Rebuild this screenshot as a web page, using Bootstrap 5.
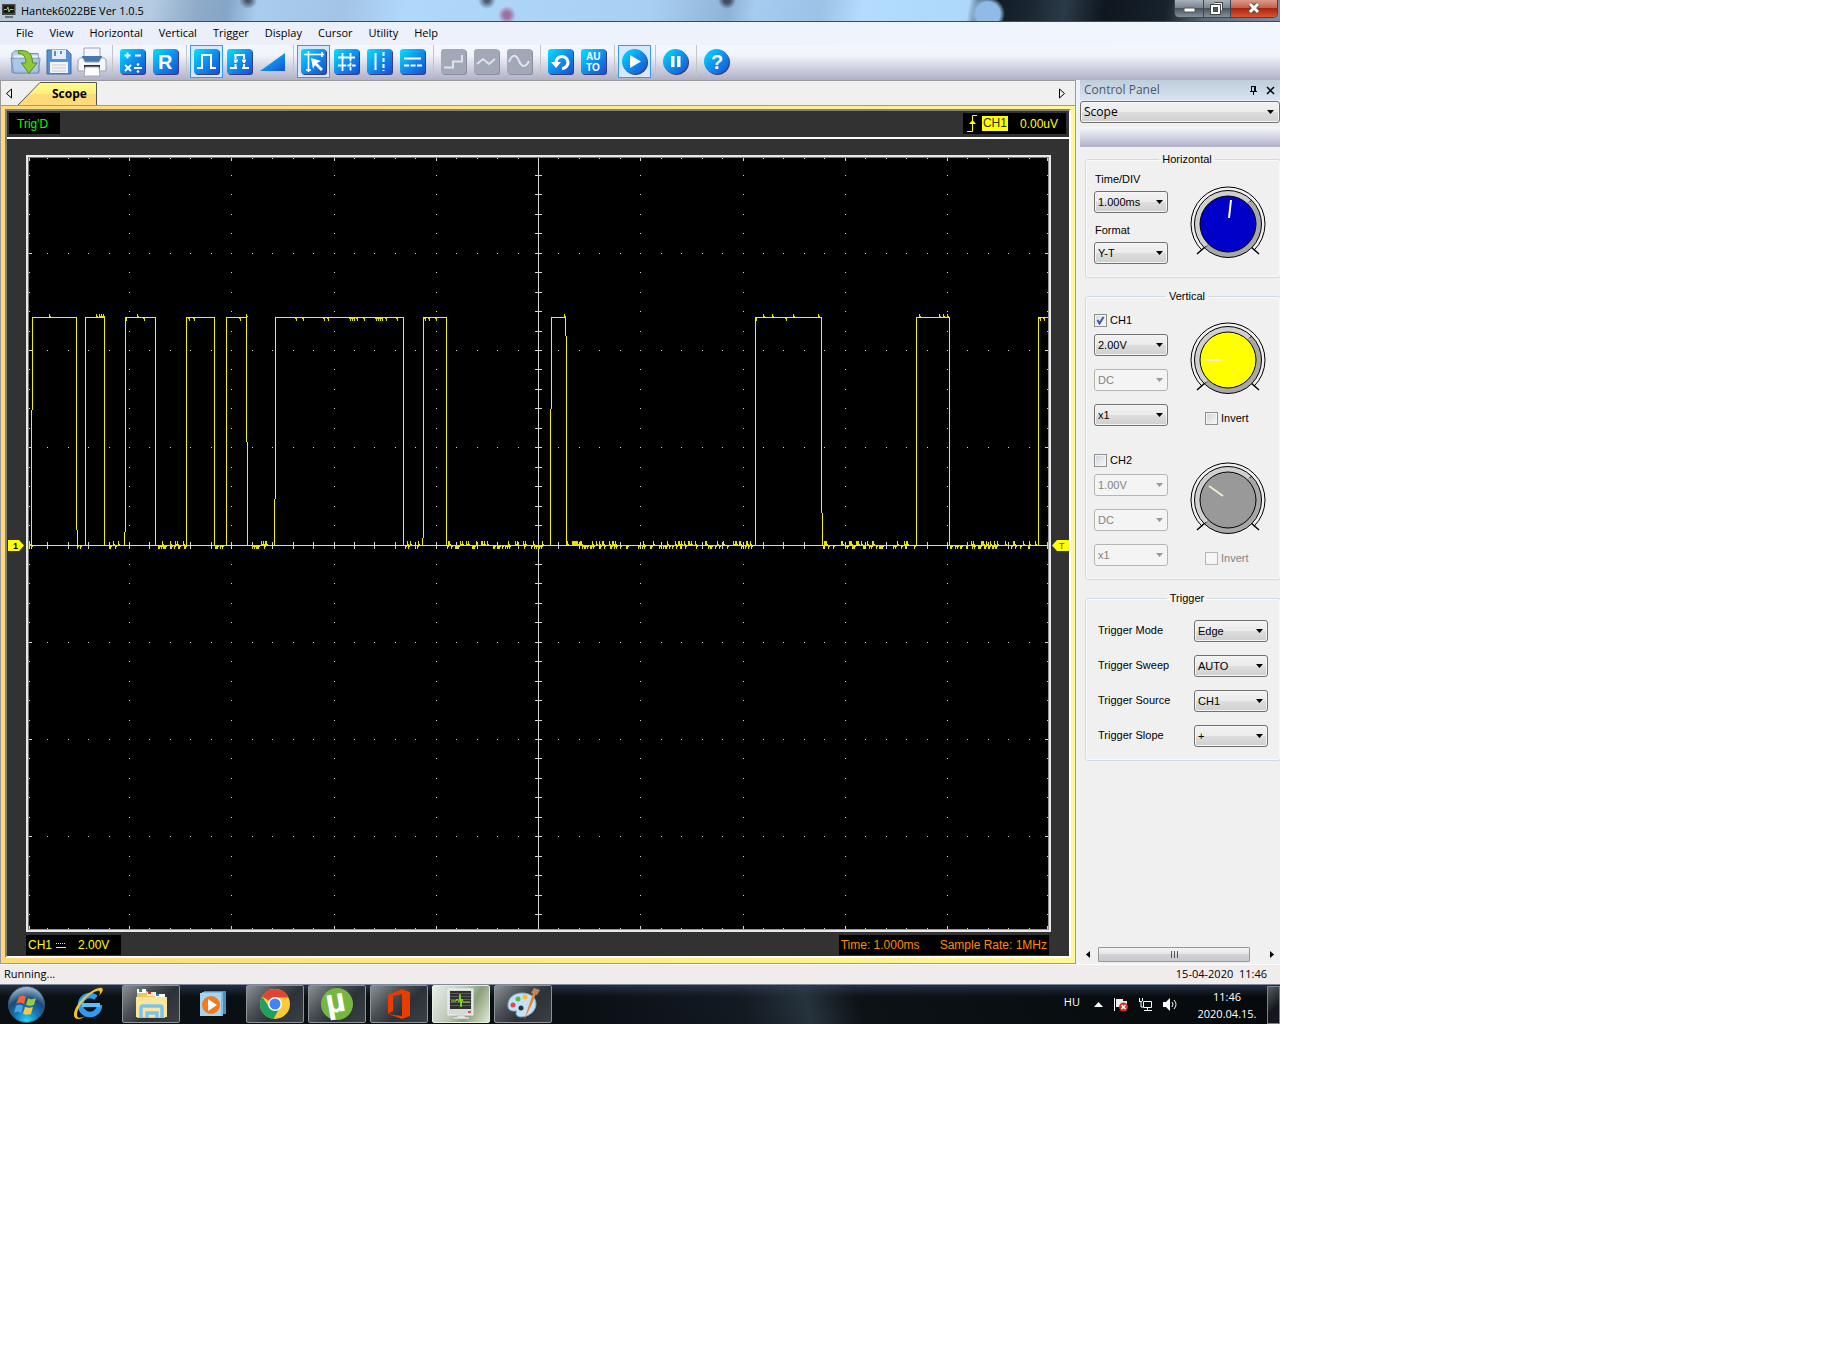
<!DOCTYPE html>
<html lang="en">
<head>
<meta charset="utf-8">
<meta name="viewport" content="width=device-width, initial-scale=1">
<title>Hantek6022BE Ver 1.0.5</title>
<link href="https://cdn.jsdelivr.net/npm/bootstrap@5.3.0/dist/css/bootstrap.min.css" rel="stylesheet">
<style>
  body { background: #fff; color: #000; font-family: "Open Sans", "Noto Sans", sans-serif; font-size: 11px; line-height: 14px; }
  svg { display: block; }
  .desktop { max-width: 1280px; }
  a { color: inherit; text-decoration: none; }

  /* window title */
  .titlebar { height: 22px; border-bottom: 1px solid #3a4a5e; padding-left: 2px;
    background:
      radial-gradient(circle at 988px 14px, #8fbbe6 0 12px, transparent 17px),
      radial-gradient(circle at 507px 15px, #a0709a 0 3px, transparent 9px),
      radial-gradient(circle at 487px 0, #4a5c74 0 2px, transparent 9px),
      radial-gradient(circle at 727px 0, #3d4c60 0 3px, transparent 9px),
      radial-gradient(circle at 248px 0, #46566a 0 2px, transparent 9px),
      linear-gradient(100deg, #b6c8da 0, #b4cbe2 150px, #8fabc9 195px, #84a5c8 225px, #a9cdef 255px, #a3c4e6 340px, #b0d8fb 400px, #a9d0f2 640px, #8fb3d6 720px, #a5cdf0 745px, #9cc2e6 810px, #b3dcfd 850px, #aed8fa 955px, #101a24 975px, #18242f 1010px, #2b3a48 1050px, #0e161e 1090px, #18222c 1150px, #5b6a7a 1190px, #8796a8 1280px); }
  .app-name { margin: 0 0 0 5px; font-size: 11px; font-weight: 400; line-height: 21px; }
  .winbtns { height: 18px; border: 1px solid #3c4650; border-top: 0; border-radius: 0 0 5px 5px; overflow: hidden; margin-right: 2px; }
  .winbtns button { border: 0; padding: 0; height: 17px; background: linear-gradient(#a9b2bb, #7b858f 45%, #4a545e 50%, #87919b); }
  .winbtns button + button { border-left: 1px solid #3c4650; }
  .winbtns .close-win { background: linear-gradient(#dc9a8c, #c8604c 45%, #a82410 50%, #d8562f); }

  .menubar { height: 23px; padding: 0 0 2px 16px; gap: 16px; background: linear-gradient(90deg, #eaeefa, #f2f6fd); }

  /* toolbar */
  .toolbar { height: 35px; padding: 0 9px; background: linear-gradient(#f4f7fd 0, #f1f4fb 28%, #d0d1e0 65%, #b0b0c8 100%); }
  .tool { width: 33px; height: 33px; padding: 0; border: 1px solid transparent; background: none; display: flex; align-items: center; justify-content: center; }
  .tool.on { border-color: #3399ff; background: #d6e8fb; }
  .tool-sep { width: 8px; height: 32px; }
  .tool-sep::before { content: ""; display: block; width: 1px; height: 32px; margin-left: 4px; background: #c4c4c4; }
  .tool svg text { font-family: "Liberation Sans", Arial, sans-serif; font-weight: 700; fill: #fff; }

  /* tab strip */
  .tabstrip { height: 25px; border-top: 1px solid #9a9a9a; border-left: 1px solid #9a9a9a; border-right: 1px solid #9a9a9a; background: #f0f0f0; padding: 0 9px 0 4px; }
  .tabstrip button { border: 0; padding: 0; background: none; }
  .tab-scope { width: 80px; height: 23px; margin-left: 5px; margin-top: 1px; padding: 5px 0 0 34px; font-size: 12px; font-weight: 700; }
  .tab-scope svg { left: 0; top: 0; z-index: 0; }
  .tab-scope span { position: relative; }

  /* scope frame */
  .scope-col { min-width: 0; }
  .frame-gold { border: 1px solid #9a9a9a; padding: 3px 4px 5px; background: linear-gradient(90deg, #ffd97a, #fff799); }
  .frame-dark { border: 2px solid #808080; border-right-color: #fff; border-bottom-color: #fff; background: #323232; font-family: "Liberation Sans", Arial, sans-serif; font-size: 12px; }
  .scope-head { height: 28px; padding: 2px 3px 0 2px; border-bottom: 2px solid #fff; }
  .scope-foot { padding: 3px 20px 1px 19px; }
  .readout { background: #000; height: 21px; }
  .readout.low { height: 20px; padding: 0 2px; }
  .green { color: #00ff00; } .yellow { color: #ffff00; } .orange { color: #ff8c00; }
  .chip { background: #ff0; color: #323232; height: 15px; line-height: 15px; padding: 0 1px; }
  .side-l { width: 19px; } .side-r { width: 18px; }
  .side-l, .side-r { padding-top: 4px; }
  .screen { border: 2px solid #e8e8e8; background: #000; }
  .screen-in { border: 1px solid #777; border-right-color: #999; border-bottom-color: #999; }
  .screen svg { width: 100%; height: auto; }

  /* control panel */
  .panel { width: 204px; background: #f0f0f0; border-left: 4px solid #eef2fb; }
  .panel-title { height: 20px; padding: 0 5px 0 4px; color: #4c5866; font-size: 12px; background: linear-gradient(#c0cedc, #d6e4f2); }
  .panel-title button { border: 0; padding: 0; background: none; }
  .panel-strip { height: 20px; margin-top: 4px; background: linear-gradient(#f4f7fd, #d4d5e3 50%, #b0b0c8); }
  .groups { padding: 5px 0 0 5px; gap: 11px; font-family: "Liberation Sans", Arial, sans-serif; font-size: 11px; }
  .groupbox { border: 1px solid #d0dce4; border-radius: 3px; width: 196px; padding: 0 0 13px 8px; box-shadow: inset 0 0 0 1px #fafafa; }
  .groupbox legend { float: none; width: auto; margin: 0 auto; padding: 0 3px; font-size: 11px; line-height: 14px; }
  .combo { width: 74px; height: 22px; padding: 0 16px 0 3px; border: 1px solid #707070; border-radius: 3px; color: #000; font-size: 11px; line-height: 14px;
    background-image: url("data:image/svg+xml,%3Csvg xmlns='http://www.w3.org/2000/svg' width='7' height='4'%3E%3Cpath d='M0 0h7L3.5 4z'/%3E%3C/svg%3E"), linear-gradient(#f2f2f2, #ebebeb 48%, #dddddd 52%, #cfcfcf);
    background-size: 7px 4px, 100% 100%; background-position: right 4px center, 0 0; box-shadow: inset 0 0 0 1px #f6f6f6; }
  .combo:disabled { color: #838383; border-color: #b4b4b4; background-color: #f4f4f4;
    background-image: url("data:image/svg+xml,%3Csvg xmlns='http://www.w3.org/2000/svg' width='7' height='4'%3E%3Cpath d='M0 0h7L3.5 4z' fill='%23999'/%3E%3C/svg%3E"); background-size: 7px 4px; background-position: right 4px center; }
  .combo-wide { width: 100%; margin-top: 1px; font-size: 12px; background-position: right 5px center, 0 0; }
  .lbl { display: block; height: 14px; margin-bottom: 5px; padding-left: 1px; }
  .tick { appearance: none; width: 13px; height: 13px; margin: 0 3px 0 0; border: 1px solid #8e8f8f; background: linear-gradient(135deg, #cfd5dc, #f8f8f8); box-shadow: inset 0 0 0 1px #f4f4f4; }
  .tick:checked { background: url("data:image/svg+xml,%3Csvg xmlns='http://www.w3.org/2000/svg' viewBox='0 0 11 11'%3E%3Cpath d='M2.500 5l2 3.500L8.500 2' fill='none' stroke='%23405a9c' stroke-width='2'/%3E%3C/svg%3E") center / 11px 11px no-repeat, linear-gradient(135deg, #d5dae2, #fafafa); }
  .tick:disabled { border-color: #b8b8b8; background: #f6f6f6; }
  .off { color: #838383; }
  .ch-row { height: 14px; }
  .ch-name { margin-bottom: 7px; }
  .channel { gap: 22px; padding-top: 10px; }
  .channel + .channel { padding-top: 27px; }
  .ch-knob { padding-top: 9px; gap: 13px; }
  .invert { padding-left: 15px; }
  .combos { gap: 13px; }
  .timebase { gap: 22px; }
  .hor-left { padding-top: 6px; }
  .hor-left .combo + .lbl { margin-top: 10px; }
  .hor-knob { padding-top: 20px; }
  .trig-rows { padding: 15px 12px 0 4px; gap: 13px; }
  .trig-rows label { padding-top: 3px; }
  .hscroll { height: 15px; margin-bottom: 2px; padding: 0 6px; }
  .hscroll button { border: 0; padding: 0; background: none; }
  .thumb { width: 152px; height: 15px; margin-left: 7px; border: 1px solid #979797; border-radius: 1px; background: linear-gradient(#f4f4f4, #e6e6ea 45%, #d2d2d8 50%, #c8c8ce); }

  .statusbar { height: 20px; padding: 2px 13px 0 4px; border-top: 1px solid #fff; background: #f0ecec; }

  /* taskbar */
  .taskbar { height: 40px; border-top: 1px solid #7c889a; color: #fff;
    background: linear-gradient(rgba(50,62,86,.7), rgba(0,0,0,0) 30%), linear-gradient(75deg, #0a0f14 0 45%, #131a22 58%, #26323c 63%, #0c1216 67%, #05090c 100%); }
  .tb-item { width: 58px; height: 38px; padding: 0; border: 1px solid transparent; border-radius: 2px; background: none; display: flex; align-items: center; justify-content: center; margin-right: 4px; }
  .tb-item svg { overflow: visible; }
  .tb-item.open { border-color: #8c9298; background: linear-gradient(135deg, #8a8f93 0, #4a5055 35%, #2c3237 60%, #3a4046 100%); }
  .tb-item.active { border-color: #e8efe4; background: linear-gradient(120deg, #e9eeee 0, #b9c6b2 45%, #8a9f7a 65%, #e0e8d6 100%); }
  .start { width: 60px; height: 38px; padding: 0 0 0 8px; border: 0; background: none; }
  .tray { gap: 10px; }
  .tray button { border: 0; padding: 0; background: none; }
  .lang { padding: 0 4px 6px 0; }
  .clock { width: 80px; line-height: 17px; }
  .tray .showdesk { width: 13px; height: 38px; border: 1px solid #7a828a; background: linear-gradient(135deg, #555e66, #12181d 60%); }
</style>
<script src="https://cdn.jsdelivr.net/npm/bootstrap@5.3.0/dist/js/bootstrap.bundle.min.js"></script>
</head>
<body>
<svg width="0" height="0" class="position-absolute" aria-hidden="true">
  <defs>
    <linearGradient id="blue" x1="0" y1="0" x2="1" y2="1"><stop offset="0" stop-color="#00e4ff"/><stop offset=".5" stop-color="#1090ee"/><stop offset="1" stop-color="#1450d0"/></linearGradient>
    <linearGradient id="gold" x1="0" y1="0" x2="0" y2="1"><stop offset="0" stop-color="#fffb86"/><stop offset=".5" stop-color="#fff07e"/><stop offset=".52" stop-color="#ffdc78"/><stop offset="1" stop-color="#ffd97a"/></linearGradient>
    <linearGradient id="ring" x1="0" y1="0" x2="1" y2="1"><stop offset=".5" stop-color="#d0d0d0"/><stop offset=".5" stop-color="#a8a8a8"/></linearGradient>
    <radialGradient id="orb" cx=".5" cy=".95" r=".95"><stop offset="0" stop-color="#20d8ff"/><stop offset=".35" stop-color="#1478b8"/><stop offset=".65" stop-color="#1c4a78"/><stop offset="1" stop-color="#a8c4d8"/></radialGradient>
    <symbol id="tile" viewBox="0 0 26 26"><rect x="1" y="1" width="25" height="25" rx="3" fill="#3c3c84"/><rect width="25" height="25" rx="3" fill="url(#blue)"/></symbol>
    <symbol id="disc" viewBox="0 0 26 26"><circle cx="13.500" cy="13.500" r="12.500" fill="#3c3c74"/><circle cx="12.500" cy="12.500" r="12.500" fill="url(#blue)"/></symbol>
    <symbol id="dull" viewBox="0 0 26 26"><rect x="1" y="1" width="25" height="25" rx="3" fill="#8a8e9e"/><rect width="25" height="25" rx="3" fill="#a2a8b8"/></symbol>
    <symbol id="dial" viewBox="0 0 76 76">
      <g fill="none" stroke="#000">
        <path d="M12 64.300a37 37 0 1 1 52 0"/><path d="M7 68l9-8M69 68l-9-8" stroke-width="1.500"/>
      </g>
      <circle cx="38" cy="38" r="33.500" fill="url(#ring)" stroke="#000"/>
      <path d="M57 18l5-4M19 58l-5 4" stroke="#000"/>
      <path d="M57 18l3-2M19 58l-3 2" stroke="#ddd"/>
    </symbol>
    <symbol id="monitor" viewBox="0 0 28 32">
      <path d="M1 1h25v26H1z" fill="#d8dada" stroke="#f6f6f6"/><path d="M3 3h21v18H3z" fill="#303030"/>
      <path d="M3 5.500h21M3 8.500h21M3 11.500h21M3 14.500h21M3 17.500h21" stroke="#5a5a5a"/><path d="M4 13h5l1-2 2 3 1-8 1 13 1-8 1 3h7" fill="none" stroke="#8ae820"/>
      <path d="M21 24h3" stroke="#d22" stroke-width="1.500"/><path d="M10 27h8v2h4v2H6v-2h4z" fill="#e0e0e0" stroke="#aaa" stroke-width=".5"/>
    </symbol>
  </defs>
</svg>

<div class="desktop">
  <header class="titlebar d-flex align-items-start">
    <svg class="mt-1" width="14" height="15" viewBox="0 0 28 30"><path d="M0 0h27v22H0z" fill="#444"/><path d="M3 3h21v15H3z" fill="#171717"/><path d="M4 11h6l2-5 2 10 2-5h7" fill="none" stroke="#8ad050" stroke-width="2"/><path d="M6 26h16" stroke="#555" stroke-width="3"/></svg>
    <h1 class="app-name">Hantek6022BE Ver 1.0.5</h1>
    <div class="winbtns d-flex ms-auto">
      <button type="button" aria-label="Minimize"><svg width="28" height="17"><rect x="9" y="8" width="11" height="4" rx="1" fill="#fff" stroke="#555"/></svg></button>
      <button type="button" aria-label="Restore"><svg width="26" height="17"><g fill="none"><path d="M10.500 3.500h7v7" stroke="#444" stroke-width="3"/><path d="M10.500 3.500h7v7" stroke="#fff"/><path d="M8 6h7v7H8z" stroke="#444" stroke-width="4"/><path d="M8 6h7v7H8z" stroke="#fff" stroke-width="2"/></g></svg></button>
      <button type="button" class="close-win" aria-label="Close"><svg width="46" height="17"><path d="M19 4l8 8M27 4l-8 8" stroke="#553" stroke-width="5"/><path d="M19 4l8 8M27 4l-8 8" stroke="#fff" stroke-width="3"/></svg></button>
    </div>
  </header>

  <nav class="menubar d-flex align-items-center" aria-label="Menu">
    <a href="#">File</a><a href="#">View</a><a href="#">Horizontal</a><a href="#">Vertical</a><a href="#">Trigger</a><a href="#">Display</a><a href="#">Cursor</a><a href="#">Utility</a><a href="#">Help</a>
  </nav>

  <div class="toolbar d-flex" role="toolbar" aria-label="Tools">
    <button class="tool" type="button" aria-label="Open"><svg width="33" height="28" viewBox="0 0 33 28"><path d="M2 25V5l3-3h8l2 3h15l1 20z" fill="#b6cdec" stroke="#6f8cae"/><path d="M4 7h26v16H4z" fill="#e8f0fa"/><path d="M1 10h31l-2 16H4z" fill="#9dbde6" opacity=".8" stroke="#6484ac"/><path d="M9 2c8-1 15 1 15 13h5l-9 11-8-11h5c0-7-3-10-8-10z" fill="#92c837" stroke="#4f8a1c"/></svg></button>
    <button class="tool" type="button" aria-label="Save"><svg width="26" height="26" viewBox="0 0 26 26"><path d="M1 1h20l4 4v20H1z" fill="#5590d8" stroke="#3a6cb0"/><path d="M6 1h14v9H6z" fill="#e4edf8"/><path d="M8 2h2v5H8zM14 2h2v3h-2z" fill="#5f8cc8"/><path d="M4 13h18v11H4z" fill="#f2f4f8"/><path d="M6 16h14M6 19h14M6 22h14" stroke="#c2c8d4"/></svg></button>
    <button class="tool" type="button" aria-label="Print"><svg width="30" height="30" viewBox="0 0 30 30"><path d="M7 1h16v12H7z" fill="#f4f6fa" stroke="#9aa4b8"/><path d="M5 9h20v6H5z" fill="#4677ac"/><path d="M1 13c2-3 5-2 5-2l2 4h14l2-4s4-1 5 2v11H1z" fill="#f6f7fa" stroke="#9aa0ae"/><path d="M7 18h16v5H7z" fill="#222c3c"/><path d="M8 20h14l1 9H7z" fill="#fff" stroke="#a6a6b0"/></svg></button>
    <span class="tool-sep"></span>
    <button class="tool" type="button" aria-label="Math"><svg width="26" height="26"><use href="#tile"/><path d="M4.500 6.500h6M7.500 3.500v6M15 6.500h6M5 16l6 6M11 16l-6 6M14 19h8" stroke="#fff" stroke-width="1.800"/><circle cx="18" cy="15.500" r="1.300" fill="#fff"/><circle cx="18" cy="22.500" r="1.300" fill="#fff"/></svg></button>
    <button class="tool" type="button" aria-label="Reference"><svg width="26" height="26"><use href="#tile"/><text x="5" y="20" font-size="20">R</text></svg></button>
    <span class="tool-sep"></span>
    <button class="tool on" type="button" aria-label="Channel 1"><svg width="26" height="26"><use href="#tile"/><path d="M3 19h5V6h9v13h5" fill="none" stroke="#fff" stroke-width="2"/></svg></button>
    <button class="tool" type="button" aria-label="Channel 2"><svg width="26" height="26"><use href="#tile"/><path d="M3 19h7M15 19h7" fill="none" stroke="#fff" stroke-width="2"/><path d="M8.500 18V6M17 18V6" stroke="#fff" stroke-width="2" stroke-dasharray="3 1"/><path d="M7 6h11M7 11.500h4M15 11.500h4" stroke="#fff" stroke-width="2"/></svg></button>
    <button class="tool" type="button" aria-label="Ramp"><svg width="26" height="26"><path d="M0 22L25 4v18z" fill="url(#blue)"/></svg></button>
    <span class="tool-sep"></span>
    <button class="tool on" type="button" aria-label="Cursor tracking"><svg width="26" height="26"><use href="#tile"/><path d="M3 5.500h20M7.500 2v21M21 3v5M5 21h5" fill="none" stroke="#fff" stroke-width="1.600"/><path d="M10 9l10 3-4 2 6 6-2 2-6-6-2 4z" fill="#fff"/></svg></button>
    <button class="tool" type="button" aria-label="Cross cursor"><svg width="26" height="26"><use href="#tile"/><path d="M8.500 4v18M4 8.500h17" stroke="#fff" stroke-width="1.800"/><path d="M16.500 4v18M4 16.500h18" stroke="#fff" stroke-width="1.800" stroke-dasharray="3.500 1.200"/></svg></button>
    <button class="tool" type="button" aria-label="Vertical cursor"><svg width="26" height="26"><use href="#tile"/><path d="M8.500 4v17" stroke="#fff" stroke-width="2"/><path d="M16.500 3v19" stroke="#fff" stroke-width="2" stroke-dasharray="4 2"/></svg></button>
    <button class="tool" type="button" aria-label="Horizontal cursor"><svg width="26" height="26"><use href="#tile"/><path d="M4 9.500h17" stroke="#fff" stroke-width="2"/><path d="M4 16.500h18" stroke="#fff" stroke-width="2" stroke-dasharray="5 1.500"/></svg></button>
    <span class="tool-sep"></span>
    <button class="tool" type="button" aria-label="Step"><svg width="26" height="26"><use href="#dull"/><path d="M3 18.500h9v-6h9V6" fill="none" stroke="#dfe3ee" stroke-width="2"/></svg></button>
    <button class="tool" type="button" aria-label="Linear"><svg width="26" height="26"><use href="#dull"/><path d="M3 15l6-5 6 5 6-5" fill="none" stroke="#dfe3ee" stroke-width="2"/></svg></button>
    <button class="tool" type="button" aria-label="Sine"><svg width="26" height="26"><use href="#dull"/><path d="M2 13C5 5 9 5 12 12s7 6 10 0" fill="none" stroke="#dfe3ee" stroke-width="2"/></svg></button>
    <span class="tool-sep"></span>
    <button class="tool" type="button" aria-label="Reset"><svg width="26" height="26"><use href="#tile"/><path d="M8 14a6 6 0 1 1 6 5.500" fill="none" stroke="#fff" stroke-width="3.200"/><path d="M3 13h10l-5 6z" fill="#fff"/></svg></button>
    <button class="tool" type="button" aria-label="Auto set"><svg width="26" height="26"><use href="#tile"/><text x="5" y="11" font-size="10">AU</text><text x="5" y="22" font-size="10">TO</text></svg></button>
    <span class="tool-sep"></span>
    <button class="tool on" type="button" aria-label="Start"><svg width="26" height="26"><use href="#disc"/><path d="M8 6l11 6.500L8 19z" fill="#fff"/></svg></button>
    <span class="tool-sep"></span>
    <button class="tool" type="button" aria-label="Pause"><svg width="26" height="26"><use href="#disc"/><path d="M8 7h3.500v11H8zM14 7h3.500v11H14z" fill="#fff"/></svg></button>
    <span class="tool-sep"></span>
    <button class="tool" type="button" aria-label="Help"><svg width="26" height="26"><use href="#disc"/><text x="7" y="20" font-size="20">?</text></svg></button>
  </div>

  <div class="d-flex">
    <main class="scope-col flex-grow-1">
      <div class="tabstrip d-flex align-items-center">
        <button type="button" aria-label="Previous tab"><svg width="8" height="11"><path d="M6.500 1v9L1.500 5.500z" fill="none" stroke="#000"/></svg></button>
        <a href="#" class="tab-scope position-relative d-block"><svg class="position-absolute" width="80" height="23"><path d="M0 23L22 1h56v22z" fill="url(#gold)"/><path d="M0 23L22 .500h56.500V23" fill="none" stroke="#555"/></svg><span>Scope</span></a>
        <button type="button" class="ms-auto" aria-label="Next tab"><svg width="8" height="11"><path d="M1.500 1v9l5-4.500z" fill="none" stroke="#000"/></svg></button>
      </div>
      <div class="frame-gold">
        <div class="frame-dark">
          <div class="scope-head d-flex justify-content-between">
            <div class="readout green d-flex align-items-center px-2 pe-2"><span class="pe-1">Trig'D</span></div>
            <div class="readout yellow d-flex align-items-center ps-1 pe-2">
              <svg width="11" height="17"><path d="M0 16.500h5.500V.500H10" fill="none" stroke="#ff0"/><path d="M2 9l3.500-4L9 9z" fill="#ff0"/></svg>
              <span class="chip ms-1 me-2">CH1</span><span class="ps-1">0.00uV</span>
            </div>
          </div>
          <div class="d-flex align-items-center pt-3">
            <div class="side-l"><svg width="18" height="11" viewBox="0 0 18 11"><path d="M1 0h11l5 5.500-5 5.500H1z" fill="#ff0"/><text x="6" y="9" font-size="9" font-weight="700">1</text></svg></div>
            <div class="screen flex-grow-1"><div class="screen-in">
              <svg id="scope" viewBox="0 0 1019 771" shape-rendering="crispEdges" role="img" aria-label="Channel 1 trace">
                <path id="grid" fill="#d8d8d8"/>
                <path id="trace" fill="none" stroke="#f0f000"/>
                <path id="noise" fill="#e4e400"/>
              </svg>
            </div></div>
            <div class="side-r"><svg width="18" height="11" viewBox="0 0 18 11"><path d="M18 0H6L1 5.500 6 11h12z" fill="#ff0"/><text x="8" y="9" font-size="9" fill="#8a4a00">T</text></svg></div>
          </div>
          <div class="scope-foot d-flex justify-content-between">
            <div class="readout low yellow d-flex align-items-center pe-2">CH1<svg class="ms-1 me-2" width="10" height="7"><path d="M0 1.500h10" stroke="#ff0" stroke-dasharray="1 1"/><path d="M0 5.500h10" stroke="#ff0"/></svg><span class="px-1">2.00V</span></div>
            <div class="readout low orange d-flex align-items-center"><span class="me-3">Time: 1.000ms</span><span class="ps-1">Sample Rate: 1MHz</span></div>
          </div>
        </div>
      </div>
    </main>

    <aside class="panel flex-shrink-0 d-flex flex-column overflow-hidden">
      <div class="panel-title d-flex align-items-center">
        <span>Control Panel</span>
        <button type="button" class="ms-auto" aria-label="Pin"><svg width="9" height="10"><path d="M2.500 1v5M6.500 1v5M1 6.500h7M2 1.500h5M4.500 7v3" stroke="#000" fill="none"/><path d="M5.500 2v5" stroke="#000"/></svg></button>
        <button type="button" class="ms-2" aria-label="Close panel"><svg width="9" height="9"><path d="M1 1l7 7M8 1L1 8" stroke="#000" stroke-width="1.500"/></svg></button>
      </div>
      <select class="form-select combo combo-wide" aria-label="Panel"><option>Scope</option></select>
      <div class="panel-strip"></div>
      <div class="groups d-flex flex-column">
        <fieldset class="groupbox">
          <legend>Horizontal</legend>
          <div class="d-flex timebase">
            <div class="hor-left">
              <label class="lbl" for="timediv">Time/DIV</label>
              <select id="timediv" class="form-select combo"><option>1.000ms</option></select>
              <label class="lbl" for="format">Format</label>
              <select id="format" class="form-select combo"><option>Y-T</option></select>
            </div>
            <div class="hor-knob"><svg width="76" height="76" role="img" aria-label="Time knob"><use href="#dial"/><circle cx="38" cy="38" r="28" fill="#0000c8" stroke="#000"/><path d="M41 14l-2 18" stroke="#fff" stroke-width="2"/></svg></div>
          </div>
        </fieldset>
        <fieldset class="groupbox">
          <legend>Vertical</legend>
          <div class="d-flex channel">
            <div>
              <div class="ch-row ch-name d-flex align-items-center"><input class="tick" type="checkbox" id="ch1" checked><label for="ch1">CH1</label></div>
              <div class="d-flex flex-column combos">
                <select class="form-select combo" aria-label="CH1 volts"><option>2.00V</option></select>
                <select class="form-select combo" aria-label="CH1 coupling" disabled><option>DC</option></select>
                <select class="form-select combo" aria-label="CH1 probe"><option>x1</option></select>
              </div>
            </div>
            <div class="ch-knob d-flex flex-column">
              <svg width="76" height="76" role="img" aria-label="CH1 knob"><use href="#dial"/><circle cx="38" cy="38" r="28" fill="#ff0" stroke="#000"/><path d="M15 38h17" stroke="#f0f0d0" stroke-width="2"/></svg>
              <div class="ch-row invert d-flex align-items-center"><input class="tick" type="checkbox" id="inv1"><label for="inv1">Invert</label></div>
            </div>
          </div>
          <div class="d-flex channel">
            <div>
              <div class="ch-row ch-name d-flex align-items-center"><input class="tick" type="checkbox" id="ch2"><label for="ch2">CH2</label></div>
              <div class="d-flex flex-column combos">
                <select class="form-select combo" aria-label="CH2 volts" disabled><option>1.00V</option></select>
                <select class="form-select combo" aria-label="CH2 coupling" disabled><option>DC</option></select>
                <select class="form-select combo" aria-label="CH2 probe" disabled><option>x1</option></select>
              </div>
            </div>
            <div class="ch-knob d-flex flex-column">
              <svg width="76" height="76" role="img" aria-label="CH2 knob"><use href="#dial"/><circle cx="38" cy="38" r="28" fill="#999" stroke="#000"/><path d="M19 24l14 10" stroke="#eeeecc" stroke-width="2"/></svg>
              <div class="ch-row invert d-flex align-items-center"><input class="tick" type="checkbox" id="inv2" disabled><label for="inv2" class="off">Invert</label></div>
            </div>
          </div>
        </fieldset>
        <fieldset class="groupbox">
          <legend>Trigger</legend>
          <div class="trig-rows d-flex flex-column">
            <div class="d-flex justify-content-between"><label for="tm">Trigger Mode</label><select id="tm" class="form-select combo"><option>Edge</option></select></div>
            <div class="d-flex justify-content-between"><label for="tsw">Trigger Sweep</label><select id="tsw" class="form-select combo"><option>AUTO</option></select></div>
            <div class="d-flex justify-content-between"><label for="tso">Trigger Source</label><select id="tso" class="form-select combo"><option>CH1</option></select></div>
            <div class="d-flex justify-content-between"><label for="tsl">Trigger Slope</label><select id="tsl" class="form-select combo"><option>+</option></select></div>
          </div>
        </fieldset>
      </div>
      <div class="hscroll d-flex align-items-center mt-auto">
        <button type="button" aria-label="Scroll left"><svg width="5" height="7"><path d="M4 0v7L0 3.500z"/></svg></button>
        <div class="thumb d-flex justify-content-center align-items-center"><svg width="9" height="7"><path d="M1.500 0v7M4.500 0v7M7.500 0v7" stroke="#555"/></svg></div>
        <button type="button" class="ms-auto" aria-label="Scroll right"><svg width="5" height="7"><path d="M1 0v7l4-3.500z"/></svg></button>
      </div>
    </aside>
  </div>

  <div class="statusbar d-flex justify-content-between"><span>Running...</span><span>15-04-2020&nbsp; 11:46</span></div>

  <footer class="taskbar d-flex">
    <button class="start" type="button" aria-label="Start menu"><svg width="37" height="37" viewBox="0 0 37 37"><circle cx="18.500" cy="18.500" r="18" fill="url(#orb)" stroke="#405668"/><path d="M11 11c3-2 5-1 7 0l-2 7c-2-1-5-2-8 0z" fill="#f0643c"/><path d="M20 12c3 2 6 1 8 0l-2 7c-3 1-5 1-8 0z" fill="#9ccc3c"/><path d="M8 20c3-2 5-1 7 0l-2 7c-2-1-4-2-7 0z" fill="#4aa4e8"/><path d="M17 21c3 1 5 1 8 0l-2 7c-3 1-5 1-8 0z" fill="#fcc83c"/></svg></button>
    <button class="tb-item" type="button" aria-label="Internet Explorer"><svg width="34" height="34" viewBox="0 0 34 34"><circle cx="18" cy="18" r="9.500" fill="none" stroke="#2c9cf0" stroke-width="5.500" stroke-dasharray="51 9"/><path d="M10 18h18" stroke="#5cc0fa" stroke-width="4"/><path d="M27 9c5-6 5-9 0-8C17 3 2 18 2 28c0 6 8 4 12 1-5 2-9 3-9-1C5 19 17 6 25 4c3-1 4 1 2 5z" fill="#f4c42c"/></svg></button>
    <button class="tb-item open" type="button" aria-label="Explorer"><svg width="33" height="32" viewBox="0 0 33 32"><path d="M2 3h10l2 3h16v24H2z" fill="#e8c860"/><path d="M2 1h9v4H2z" fill="#fff"/><path d="M4 1h3v3H4z" fill="#1a2"/><path d="M12 4h9v4h-9z" fill="#f4eccc"/><path d="M13 4h3v2h-3z" fill="#d33"/><path d="M20 6h10v3H20z" fill="#fff"/><path d="M21 6h3v2h-3z" fill="#28d"/><path d="M1 9h31v20H1z" fill="#f9e59c"/><path d="M6 30V20q0-2 2-2h17q2 0 2 2v10M12 30v-5h10v5" fill="none" stroke="#7cc4ec" stroke-width="3.500"/></svg></button>
    <button class="tb-item" type="button" aria-label="Media Player"><svg width="28" height="28" viewBox="0 0 28 28"><path d="M5 1h22v23H5z" fill="#4b8fbc"/><path d="M3 2h21v24H3z" fill="#7fbce0"/><path d="M1 3h21v23H1z" fill="#a8d4ee"/><circle cx="12" cy="15" r="9" fill="#f07a1c"/><path d="M9 9l9 6-9 6z" fill="#fff"/></svg></button>
    <button class="tb-item open" type="button" aria-label="Chrome"><svg width="32" height="32" viewBox="0 0 32 32"><circle cx="16" cy="16" r="15" fill="#fbc93a"/><path d="M16 16L3 8.500A15 15 0 0 1 29.500 9.500H16z" fill="#e04434"/><path d="M3 8.500A15 15 0 0 0 14.500 31L21 19l-5-3-6 3z" fill="#1fa05c"/><circle cx="16" cy="16" r="7" fill="#fff"/><circle cx="16" cy="16" r="5.500" fill="#4484f0"/></svg></button>
    <button class="tb-item open" type="button" aria-label="uTorrent"><svg width="32" height="34" viewBox="0 0 32 34"><circle cx="16" cy="17" r="16" fill="#76b83f"/><text x="5" y="25" transform="rotate(-10 16 17)" font-family="Liberation Sans, sans-serif" font-weight="700" font-size="34" fill="#fff">µ</text></svg></button>
    <button class="tb-item open" type="button" aria-label="Office"><svg width="26" height="32" viewBox="0 0 26 32"><path d="M2 7L16 1l8 3v24l-8 3L2 26l14 2V6L7 8v15l-5 3z" fill="#eb3c00"/></svg></button>
    <button class="tb-item active" type="button" aria-label="Hantek"><svg width="28" height="34"><use href="#monitor"/></svg></button>
    <button class="tb-item open" type="button" aria-label="Paint"><svg width="34" height="34" viewBox="0 0 34 34"><path d="M2 20C1 11 8 6 16 6s14 4 14 11-7 13-15 13c-5 0-6-4-4-6-2 0-8 1-9-4z" fill="#c4e0f2" stroke="#7ba8c8"/><circle cx="7" cy="18" r="2.500" fill="#e44"/><circle cx="12" cy="12" r="2.500" fill="#5b4"/><circle cx="19" cy="10" r="2.500" fill="#fb3"/><circle cx="15" cy="21" r="2.500" fill="#234"/><path d="M27 6L18 33l9-18 3-9z" fill="#e08a3c"/><path d="M25 6l3-5 6 2-3 5z" fill="#b88860"/></svg></button>

    <div class="tray d-flex align-items-center ms-auto">
      <span class="lang">HU</span>
      <button type="button" aria-label="Hidden icons"><svg width="9" height="5"><path d="M0 5l4.500-5L9 5z" fill="#fff"/></svg></button>
      <button type="button" aria-label="Action Center"><svg width="15" height="15"><path d="M1.500 1v13" stroke="#fff"/><path d="M3 2h7v2h4v6H3z" fill="#eee"/><circle cx="10.500" cy="10" r="4.500" fill="#d43020"/><path d="M8.500 8l4 4M12.500 8l-4 4" stroke="#fff" stroke-width="1.500"/></svg></button>
      <button type="button" aria-label="Network"><svg width="15" height="15"><path d="M5.500 4.500h8v6h-8zM6 13.500h8M9.500 11v2M1.500 1v3M4.500 1v3M1 4.500h3M3 5v5h2" fill="none" stroke="#fff"/></svg></button>
      <button type="button" aria-label="Volume"><svg width="14" height="13"><path d="M0 4h3l4-4v13L3 9H0z" fill="#fff"/><path d="M9 4q2 2.500 0 5M11 2q4 4.500 0 9" fill="none" stroke="#fff"/></svg></button>
      <div class="d-flex align-items-center"><div class="clock text-center"><div>11:46</div><div>2020.04.15.</div></div><button type="button" class="showdesk" aria-label="Show desktop"></button></div>
    </div>
  </footer>
</div>

<script>
  const W = 1019, H = 771, CX = 509, CY = 387, HI = 159;
  const px = (x, y, w = 1, h = 1) => `M${x} ${y}h${w}v${h}h${-w}z`;

  // graticule: 10 x 8 divisions, 5 minor steps each
  const gx = i => Math.min(W - 1, Math.max(0, Math.round(CX + i * 20.45)));
  const gy = j => Math.floor(CY + j * 19.45);
  let g = px(CX, 0, 1, H) + px(0, CY, W, 1);
  for (let i = -25; i <= 25; i++) {
    const x = gx(i), major = i % 5 === 0, t = major ? 3 : 1;
    g += px(x, 0, 1, t) + px(x, H - t, 1, t) + px(x, CY - 3, 1, 7);
    for (let j = -15; j <= 15; j += 5) g += px(x, gy(j));
  }
  for (let j = -19; j <= 19; j++) {
    const y = gy(j), t = j % 5 === 0 ? 3 : 1;
    g += px(0, y, t, 1) + px(W - t, y, t, 1) + px(CX - 3, y, 7, 1);
    for (let i = -20; i <= 20; i += 5) g += px(gx(i), y);
  }
  document.getElementById('grid').setAttribute('d', g);

  // pulses: [rise x, fall x, y where the rising edge shifts a pixel, same for the falling edge]
  const pulses = [[3,47,252,372],[56,75],[96,126,374],[157,185],[197,217,0,284],[246,374,341],[394,417,380],[522,536,251,178],[726,792,0,355],[887,920],[1009,1019]];
  let t = `M0 ${CY}.5`;
  for (const [r, f, ry, fy] of pulses) {
    t += ry ? `H${r - 1}.5V${ry}M${r}.5 ${ry}V${HI}.5` : `H${r}.5V${HI}.5`;
    if (f >= W) { t += `H${W}`; break; }
    t += `H${f}.5` + (fy ? `V${fy}M${f + 1}.5 ${fy}` : '') + `V${CY}.5`;
  }
  document.getElementById('trace').setAttribute('d', t);

  // one-count jitter on the high level, then on the zero level
  let n = '';
  for (const x of [20,67,70,72,74,108,217,535,734,743,764,789,890,910,914,918]) n += px(x, HI - 3, 1, 3) + px(x + 1, HI - 1, 1, 1);
  for (const x of [97,115,160,165,211,267,274,295,299,321,323,325,328,335,347,349,351,353,357,368,396,400,407,727,757,1011,1015]) n += px(x, HI + 1, 1, 3) + px(x - 1, HI + 1, 1, 1);
  let seed = 7;
  const rnd = () => (seed = (seed * 16807) % 2147483647) / 2147483647;
  for (const [a, b] of [[0,3],[48,54],[76,95],[127,157],[186,197],[219,238],[375,390],[418,520],[538,724],[794,887],[921,1007]])
    for (let x = a; x < b; x++) {
      const k = rnd();
      if (k < .2) n += px(x, CY - 4, 1, 4) + px(x + 1, CY - 1);
      else if (k < .48) n += px(x, CY + 1, 1, 3) + px(x + 1, CY + 1);
    }
  document.getElementById('noise').setAttribute('d', n);
</script>
</body>
</html>
